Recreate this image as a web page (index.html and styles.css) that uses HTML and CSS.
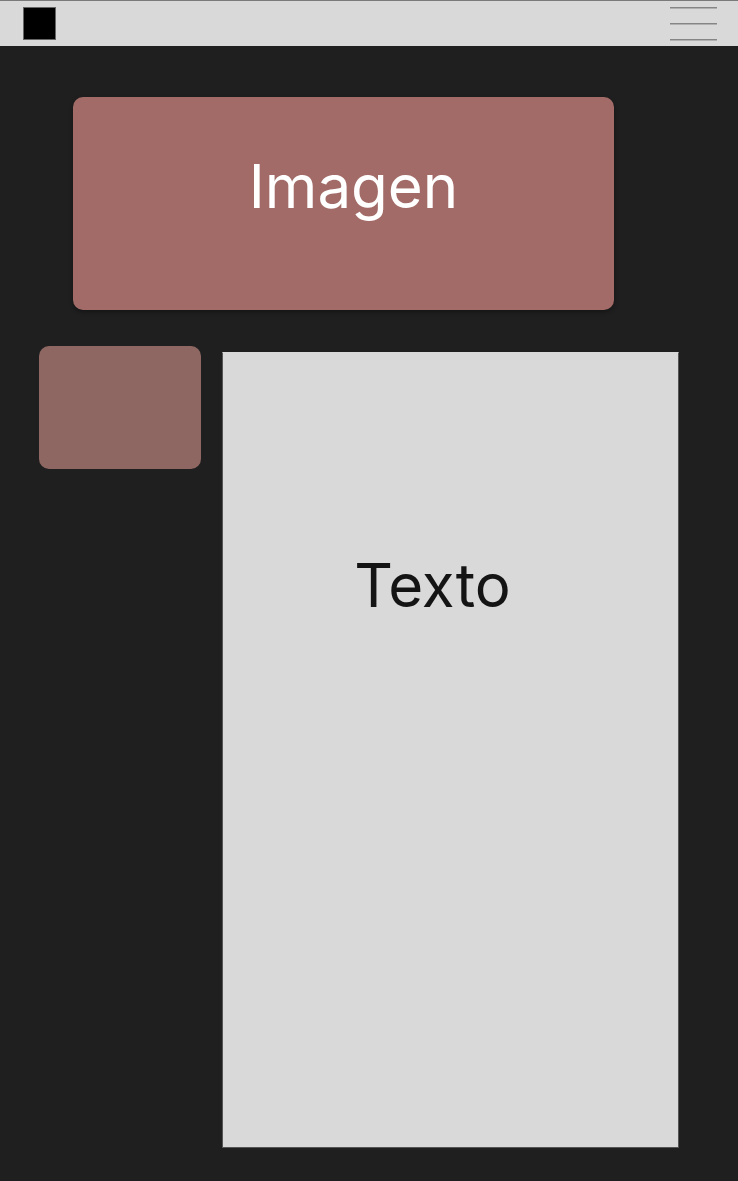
FILE: index.html
```html
<!DOCTYPE html>
<html lang="es">
<head>
<meta charset="UTF-8" />
<meta name="viewport" content="width=device-width, initial-scale=1" />
<title>Maqueta</title>
<link rel="stylesheet" href="styles.css">
</head>
<body>
  <header class="topbar">
    <div class="logo"></div>
    <div class="menu-btn" aria-label="Menú">
      <span></span>
      <span></span>
      <span></span>
    </div>
  </header>

  <main class="content">
    <div class="hero-img">Imagen</div>

    <div class="row">
      <div class="thumb"></div>
      <div class="text-box">Texto</div>
    </div>
  </main>
</body>
</html>
```

FILE: styles.css
```css
body {
  margin: 0;
  background: #1f1f1f;
  font-family: Inter, "Noto Sans", sans-serif;
}
.topbar {
  display: flex;
  justify-content: space-between;
  align-items: center;
  height: 45px;
  padding: 0 21px 0 23px;
  background: #d9d9d9;
  border-top: 1px solid #7a7a7a;
}
.logo {
  width: 31px;
  height: 31px;
  background: #000;
  border: 1px solid #666;
}
.menu-btn {
  display: flex;
  flex-direction: column;
  justify-content: space-between;
  width: 47px;
  height: 33px;
}
.menu-btn span {
  display: block;
  height: 1px;
  background: #858585;
  box-shadow: 0 1px 0 #b0b0b0;
}
.content {
  padding-top: 51px;
}
.hero-img {
  box-sizing: border-box;
  width: 541px;
  height: 213px;
  margin-left: 73px;
  padding: 53px 0 0 20px;
  background: #a26b67;
  border-radius: 10px;
  box-shadow: 0 2px 4px rgba(0,0,0,0.35);
  color: #fff;
  font-size: 60px;
  line-height: 72px;
  text-align: center;
}
.row {
  display: flex;
  align-items: flex-start;
  gap: 21px;
  margin-top: 36px;
  padding-left: 39px;
}
.thumb {
  width: 162px;
  height: 123px;
  background: #8e6763;
  border-radius: 10px;
}
.text-box {
  box-sizing: border-box;
  width: 457px;
  height: 796px;
  margin-top: 6px;
  padding: 196px 36px 0 0;
  background: #d9d9d9;
  border: 1px solid #555;
  border-top-color: #d9d9d9;
  color: #141414;
  font-size: 60px;
  line-height: 72px;
  text-align: center;
}
```
